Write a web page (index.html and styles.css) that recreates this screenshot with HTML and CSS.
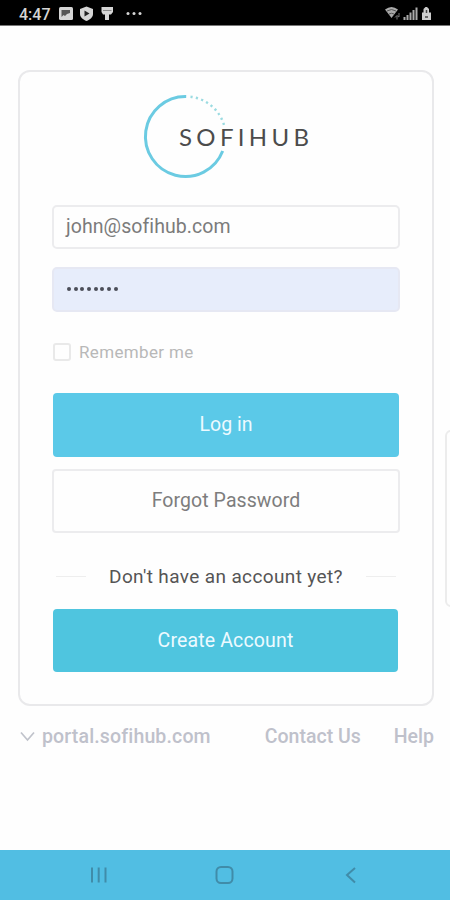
FILE: index.html
```html
<!DOCTYPE html>
<html lang="en">
<head>
<meta charset="utf-8">
<title>SofiHub</title>
<link rel="stylesheet" href="styles.css">
</head>
<body>
<div class="screen">
  <header class="status">
    <span class="time">4:47</span>
    <svg class="notices" width="90" height="16" viewBox="0 0 90 16">
      <rect x="1" y="1" width="14" height="13" rx="1.500" fill="#d5d5d5"/>
      <path d="M3.500 4H12v3L9 8 7 10 5.500 9 3.500 11z" fill="#555"/>
      <path d="M28.500 0.500 35 3v5c0 3.500-3 5.500-6.500 7C25 13.500 22 11.500 22 8V3z" fill="#d5d5d5"/>
      <path d="M26.500 4.500 31.500 7.500 26.500 10.500z" fill="#222"/>
      <path d="M43.500 1H55v5l-2 2.500h-2V14h-4V8.500h-2L43.500 6z" fill="#d5d5d5"/>
      <path d="M45 4.500h8.500" stroke="#888"/>
      <g fill="#d5d5d5"><circle cx="70" cy="7.500" r="1.500"/><circle cx="76" cy="7.500" r="1.500"/><circle cx="82" cy="7.500" r="1.500"/></g>
    </svg>
    <svg class="signals" width="49" height="16" viewBox="0 0 49 16">
      <path d="M1 3.500Q7.500-1.500 14 3.500L7.500 12z" fill="#aaa"/>
      <path d="M3 5q4.500-3 9 0M5 8q2.500-1.500 5 0" fill="none" stroke="#555"/>
      <path d="M11 11.500l2-2v4M15 7v4l-1.500-1" fill="none" stroke="#777"/>
      <path d="M20.500 11v3M23.500 9v5M26.500 6.500V14M29.500 4v10M32.500 1.500V14" stroke="#aaa" stroke-width="2"/>
      <path d="M38 6.500h1.500V3l2-2h1.500l2 2v3.500H47V14h-9z" fill="#ccc"/>
      <path d="M42.500 4v3M41 11h3" stroke="#444" stroke-width="1.500"/>
    </svg>
  </header>
  <main class="main">
    <section class="card">
      <svg class="logo" width="180" height="94" viewBox="135 90 180 94">
        <path d="M187 96.500A40 40 0 1 0 223.500 151" fill="none" stroke="#6bcbe2" stroke-width="3" transform="translate(-.8 0)"/>
        <path d="M190.500 96.700A40 40 0 0 1 224 125" fill="none" stroke="#9bdbe1" stroke-width="2.400" stroke-dasharray="2.200 3.300"/>
        <text class="brand" x="179" y="145.500" textLength="130">SOFIHUB</text>
      </svg>
      <div class="field email">john@sofihub.com</div>
      <div class="field password"><i></i><i></i><i></i><i></i><i></i><i></i><i></i><i></i></div>
      <div class="remember"><span class="box"></span><span>Remember me</span></div>
      <div class="button login">Log in</div>
      <div class="button forgot">Forgot Password</div>
      <div class="divider"><span class="question">Don't have an account yet?</span></div>
      <div class="button create">Create Account</div>
    </section>
    <footer class="links">
      <svg class="chevron" width="15" height="11" viewBox="0 0 15 11"><path d="M1 1.500 7.500 9 14 1.500" fill="none" stroke="#c0c3cb" stroke-width="1.700"/></svg>
      <span class="portal">portal.sofihub.com</span>
      <span class="contact">Contact Us</span>
      <span class="help">Help</span>
    </footer>
  </main>
  <div class="edge-handle"></div>
  <nav class="nav">
    <svg width="18" height="18" viewBox="0 0 18 18"><path d="M2 1.500v15M8.700 1.500v15M15.500 1.500v15"/></svg>
    <svg width="20" height="20" viewBox="0 0 20 20"><rect x="1.500" y="2" width="16" height="16" rx="4.500"/></svg>
    <svg width="18" height="18" viewBox="0 0 18 18"><path d="M13 2 5 9l8 7.500"/></svg>
  </nav>
</div>
</body>
</html>
```
FILE: styles.css
```css
* { box-sizing: border-box; }
body { margin: 0; background: #fefefe; font-family: Roboto, "Liberation Sans", sans-serif; }
.screen { position: relative; display: flex; flex-direction: column; width: 450px; height: 900px; overflow: hidden; }
.status { display: flex; align-items: center; height: 26px; padding: 3px 17px 0 19px; background: #000; border-bottom: 1px solid #777; }
.time { width: 39px; color: #d5d5d5; font-size: 16px; font-weight: 500; line-height: 18px; padding-top: 1px; }
.signals { margin-left: auto; }
.main { flex: 1; padding: 44px 16px 0 18px; }
.card { display: flex; flex-direction: column; height: 636px; padding: 18px 32px 0; border: 2px solid #e9e9eb; border-radius: 12px; }
.logo { align-self: flex-start; margin-left: 83px; }
.brand { font-family: Lato, sans-serif; font-size: 24px; font-weight: 400; fill: #4c4c4c; }
.field { display: flex; align-items: center; border: 2px solid #ececee; border-radius: 5px; padding: 0 12px; }
.email { height: 44px; margin-top: 21px; padding-bottom: 2px; color: #7b7b7b; font-size: 19.5px; letter-spacing: .07px; }
.password { height: 45px; margin-top: 18px; gap: 2.7px; padding-left: 13px; padding-bottom: 2px; background: #e7edfb; border-color: #e6e8f3; }
.password i { width: 4px; height: 4px; border-radius: 2px; background: #4b4d58; }
.remember { display: flex; align-items: center; gap: 8px; height: 20px; margin: 30px 0 0 1px; color: #b8b8b8; font-size: 17px; letter-spacing: .35px; }
.box { width: 18px; height: 18px; border: 2px solid #e9e9e9; border-radius: 3px; }
.button { display: flex; align-items: center; justify-content: center; border-radius: 4px; font-size: 19.5px; padding-bottom: 1px; }
.login { height: 64px; margin: 31px 1px 0; padding-bottom: 2px; color: #edfaff; background: #5bc9e8; }
.forgot { height: 64px; margin-top: 12px; color: #7d7d7d; border: 2px solid #ececee; letter-spacing: .08px; }
.divider { display: flex; align-items: center; gap: 23px; height: 24px; margin: 31px 4px 0; color: #555; font-size: 19px; }
.divider::before, .divider::after { content: ""; flex: 1; height: 1px; background: #eee; }
.question { letter-spacing: .37px; white-space: nowrap; }
.create { height: 63px; margin: 21px 2px 0 1px; color: #edfaff; background: #4fc5df; letter-spacing: .15px; }
.links { display: flex; align-items: center; height: 24px; margin-top: 18px; padding-left: 2px; color: #bfc1cb; font-size: 19.5px; font-weight: 500; white-space: nowrap; }
.portal { margin-left: 7px; letter-spacing: .15px; }
.contact { margin-left: auto; }
.help { margin-left: 33px; }
.edge-handle { position: absolute; left: 445px; top: 430px; width: 12px; height: 177px; border: 2px solid #ececec; border-radius: 7px; }
.nav { display: flex; align-items: center; justify-content: space-between; height: 50px; padding: 0 90px; background: #51bee3; }
.nav svg { fill: none; stroke: #408ca9; stroke-width: 2; }
```
